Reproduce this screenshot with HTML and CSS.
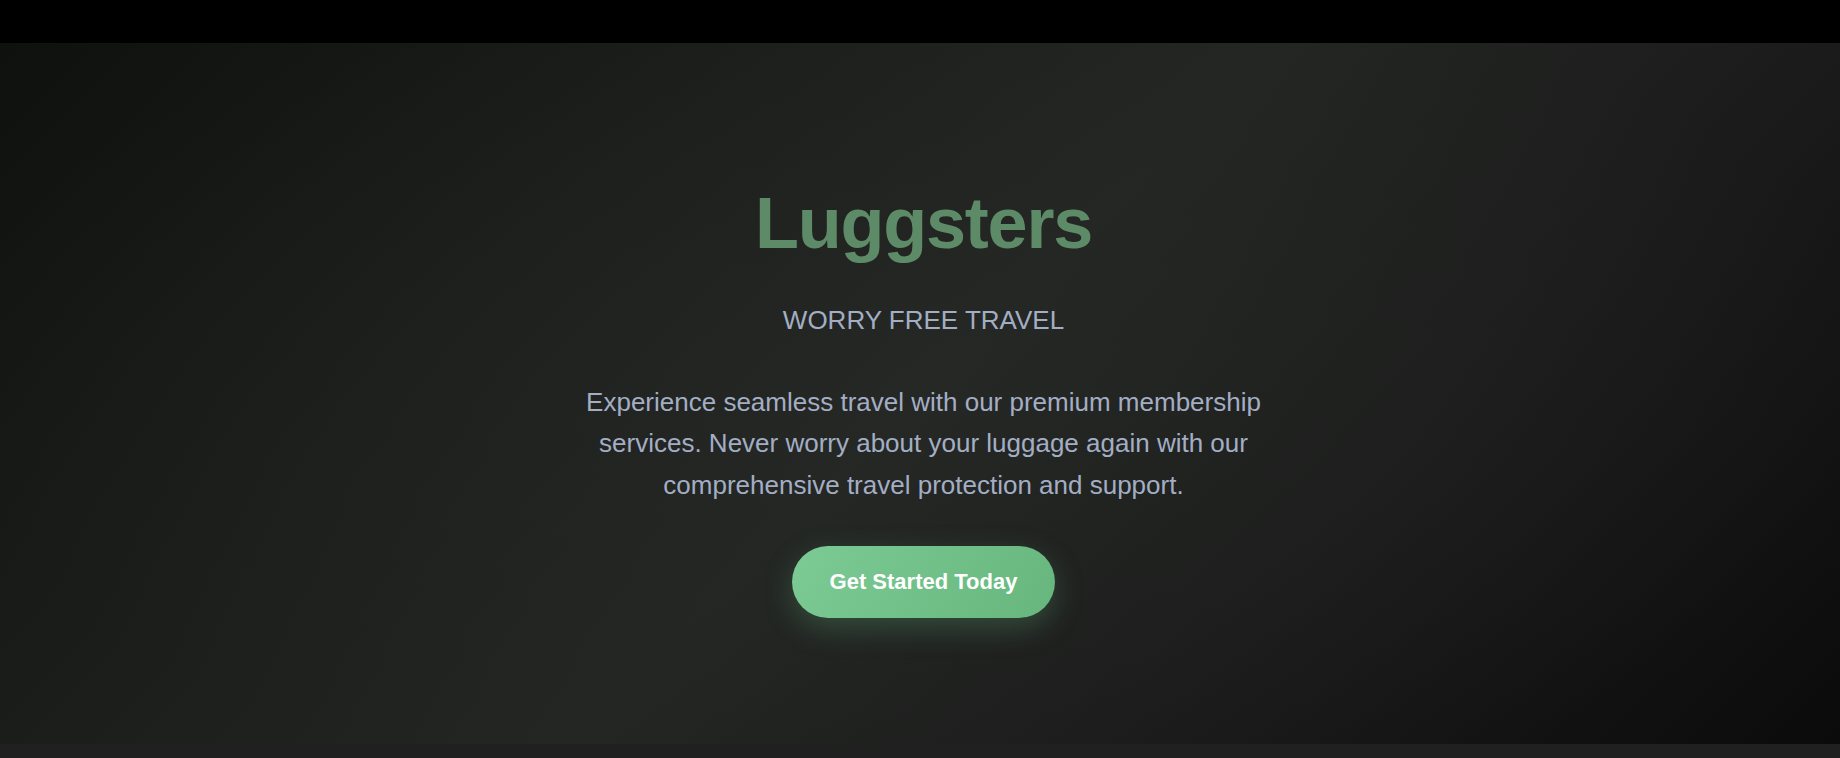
FILE: index.html
```html
<!DOCTYPE html>
<html lang="en">
<head>
<meta charset="utf-8">
<title>Luggsters</title>
<link rel="stylesheet" href="styles.css">
</head>
<body>
<header class="topbar"></header>
<section class="hero">
  <div class="hero-content">
    <h1 class="hero-title">Luggsters</h1>
    <p class="hero-subtitle">WORRY FREE TRAVEL</p>
    <p class="hero-text">Experience seamless travel with our premium membership services. Never worry about your luggage again with our comprehensive travel protection and support.</p>
    <a class="hero-button" href="#">Get Started Today</a>
  </div>
</section>
<section class="next-section"></section>
</body>
</html>
```
FILE: styles.css
```css
* { box-sizing: border-box; }
html, body { margin: 0; padding: 0; }
body {
  background: #202020;
  font-family: "Liberation Sans", Arial, sans-serif;
  overflow: hidden;
}
.topbar {
  height: 43px;
  background: #000;
}
.hero {
  height: 701px;
  padding-top: 137px;
  padding-left: 7px;
  background:
    radial-gradient(ellipse 55% 60% at 50% 50%, rgba(40,44,40,0.35) 0%, rgba(40,44,40,0) 100%),
    linear-gradient(135deg, #0f110f 0%, #1c1e1c 30%, #232623 50%, #1b1b1b 72%, #0a0b0a 100%);
  display: flex;
  justify-content: center;
}
.hero-content {
  width: 700px;
  display: flex;
  flex-direction: column;
  align-items: center;
  text-align: center;
}
.hero-title {
  margin: 0;
  font-size: 72px;
  line-height: 1.2;
  font-weight: 700;
  letter-spacing: -1.2px;
  color: #5e8b67;
}
.hero-subtitle {
  margin: 39px 0 0;
  font-size: 26px;
  line-height: 1.2;
  color: #a3aec4;
}
.hero-text {
  margin: 45px 0 0;
  font-size: 26px;
  line-height: 1.6;
  color: #a3aec4;
}
.hero-button {
  margin-top: 40px;
  display: inline-block;
  height: 72px;
  padding: 0 38px;
  line-height: 72px;
  border-radius: 36px;
  background: linear-gradient(120deg, #7ccb94 0%, #66b67e 100%);
  color: #fff;
  font-size: 22px;
  font-weight: 700;
  text-decoration: none;
  box-shadow: 0 10px 30px rgba(104, 184, 128, 0.28);
}
.next-section {
  height: 14px;
  background: #202020;
}
```
